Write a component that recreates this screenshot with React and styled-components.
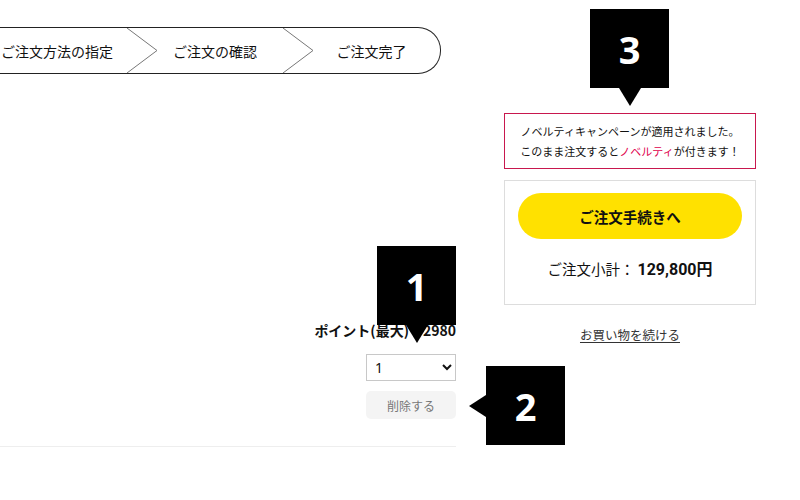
import React from "react";
import styled, { createGlobalStyle, css } from "styled-components";

const GlobalStyle = createGlobalStyle`
  html, body { margin: 0; padding: 0; background: #fff; }
  body { font-family: "Noto Sans CJK JP", "Noto Sans", sans-serif; color: #111; }
  * { box-sizing: border-box; }
`;

const Page = styled.div`
  position: relative;
  width: 800px;
  height: 500px;
  overflow: hidden;
  display: flex;
  align-items: flex-start;
`;

const LeftCol = styled.div`
  width: 456px;
  display: flex;
  flex-direction: column;
`;

const Stepper = styled.div`
  margin-top: 27px;
  margin-left: -13px;
  width: 454px;
  height: 47px;
  display: flex;
  align-items: stretch;
  border: 1px solid #222;
  border-left: none;
  border-radius: 0 23px 23px 0;
`;

const Step = styled.div`
  width: ${(p) => p.$w}px;
  display: flex;
  align-items: center;
  justify-content: center;
  padding-right: ${(p) => p.$pr || 0}px;
  font-size: 14px;
  color: #111;
  white-space: nowrap;
`;

const Chevron = () => (
  <svg width="30" height="45" viewBox="0 0 30 45" style={{ flex: "none" }}>
    <polyline points="0,0 30,22.5 0,45" fill="none" stroke="#777" strokeWidth="1" />
  </svg>
);

const PointsSection = styled.div`
  margin-top: 247px;
  display: flex;
  flex-direction: column;
  align-items: flex-end;
`;

const PointsLabel = styled.div`
  font-size: 14px;
  font-weight: 700;
  line-height: 19px;
  color: #111;
`;

const Select = styled.select`
  margin-top: 14px;
  width: 90px;
  height: 27px;
  border: 1px solid #c8c8c8;
  border-radius: 0;
  background: #fff;
  font-family: "Noto Sans", sans-serif;
  font-size: 14px;
  color: #111;
  padding: 0 4px;
`;

const DeleteButton = styled.button`
  margin-top: 10px;
  width: 90px;
  height: 28px;
  border: none;
  border-radius: 5px;
  background: #f4f4f4;
  color: #777;
  font-family: "Noto Sans CJK JP", sans-serif;
  font-size: 12px;
`;

const Divider = styled.div`
  margin-top: 27px;
  height: 1px;
  background: #eee;
`;

const RightCol = styled.div`
  margin-left: 48px;
  width: 252px;
  padding-top: 113px;
  display: flex;
  flex-direction: column;
`;

const NoveltyBox = styled.div`
  border: 1px solid #c8174e;
  padding: 7px 0;
  font-size: 11px;
  line-height: 20px;
  text-align: center;
  color: #111;
`;

const Red = styled.span`
  color: #e0004d;
`;

const Card = styled.div`
  margin-top: 11px;
  border: 1px solid #ddd;
  padding: 12px 13px 22px;
  display: flex;
  flex-direction: column;
  align-items: center;
`;

const OrderButton = styled.button`
  width: 224px;
  height: 46px;
  border: none;
  border-radius: 23px;
  background: #ffe100;
  font-family: "Noto Sans CJK JP", sans-serif;
  font-size: 14.5px;
  font-weight: 700;
  color: #111;
`;

const Subtotal = styled.div`
  margin-top: 18px;
  line-height: 24px;
  font-size: 14.5px;
  color: #111;
  display: flex;
  align-items: baseline;
`;

const Price = styled.span`
  font-family: Roboto, "Noto Sans CJK JP", sans-serif;
  font-weight: 700;
  font-size: 16px;
  margin-left: 3px;
`;

const ContinueLink = styled.a`
  margin-top: 20px;
  align-self: center;
  font-size: 12.5px;
  line-height: 20px;
  color: #333;
  text-decoration: underline;
  text-underline-offset: 2px;
`;

const arrowStyles = {
  down: css`
    left: 50%;
    top: 100%;
    transform: translateX(-50%);
    border-left: 11px solid transparent;
    border-right: 11px solid transparent;
    border-top: 18px solid #000;
  `,
  left: css`
    right: 100%;
    top: 50%;
    transform: translateY(-50%);
    border-top: 11px solid transparent;
    border-bottom: 11px solid transparent;
    border-right: 17px solid #000;
  `,
};

const Badge = styled.div`
  position: absolute;
  left: ${(p) => p.$x}px;
  top: ${(p) => p.$y}px;
  width: 79px;
  height: 79px;
  background: #000;
  color: #fff;
  display: flex;
  align-items: center;
  justify-content: center;
  font-family: "Open Sans", "Noto Sans", sans-serif;
  font-weight: 700;
  font-size: 38px;
  &::after {
    content: "";
    position: absolute;
    width: 0;
    height: 0;
    ${(p) => arrowStyles[p.$arrow]}
  }
`;

export default function App() {
  return (
    <>
      <GlobalStyle />
      <Page>
        <LeftCol>
          <Stepper>
            <Step $w={140}>ご注文方法の指定</Step>
            <Chevron />
            <Step $w={126} $pr={10}>ご注文の確認</Step>
            <Chevron />
            <Step $w={127} $pr={10}>ご注文完了</Step>
          </Stepper>
          <PointsSection>
            <PointsLabel>ポイント(最大)：2980</PointsLabel>
            <Select defaultValue="1">
              <option value="1">1</option>
              <option value="2">2</option>
            </Select>
            <DeleteButton>削除する</DeleteButton>
          </PointsSection>
          <Divider />
        </LeftCol>
        <RightCol>
          <NoveltyBox>
            ノベルティキャンペーンが適用されました。
            <br />
            このまま注文すると<Red>ノベルティ</Red>が付きます！
          </NoveltyBox>
          <Card>
            <OrderButton>ご注文手続きへ</OrderButton>
            <Subtotal>
              ご注文小計：<Price>129,800円</Price>
            </Subtotal>
          </Card>
          <ContinueLink href="#">お買い物を続ける</ContinueLink>
        </RightCol>
        <Badge $x={377} $y={246} $arrow="down">1</Badge>
        <Badge $x={486} $y={366} $arrow="left">2</Badge>
        <Badge $x={590} $y={9} $arrow="down">3</Badge>
      </Page>
    </>
  );
}
